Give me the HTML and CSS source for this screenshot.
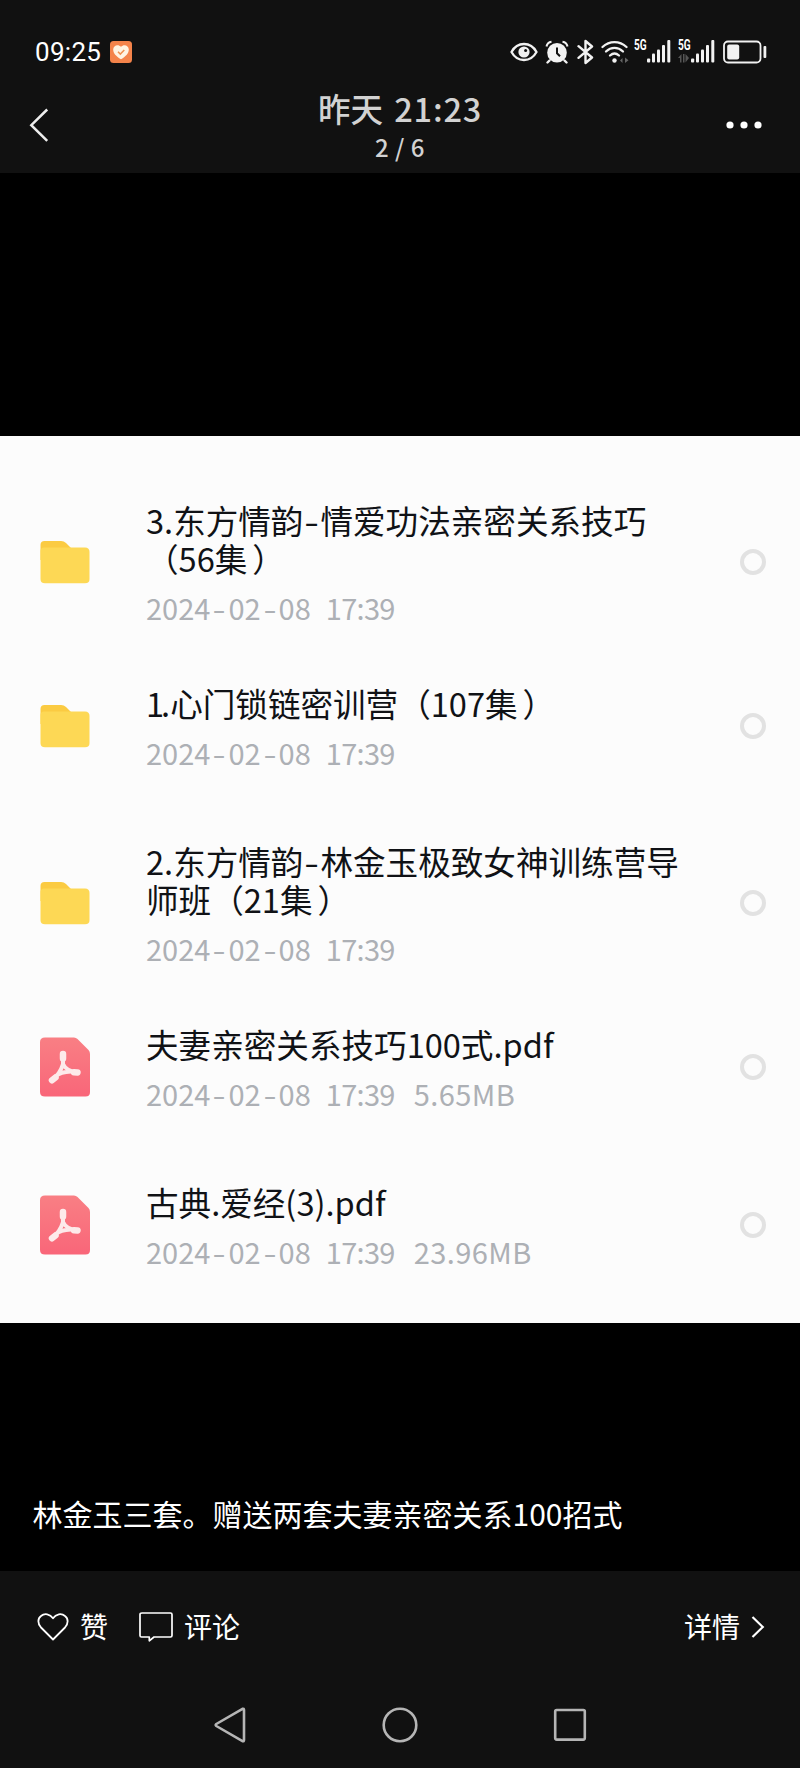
FILE: index.html
```html
<!DOCTYPE html>
<html lang="zh-CN">
<head>
  <meta charset="UTF-8">
  <title>昨天 21:23</title>
  <link rel="stylesheet" href="styles.css">
</head>
<body>

  <header class="header">
    <div class="status-bar">
      <span class="clock">09:25</span>
      <svg class="badge" width="22" height="22" viewBox="0 0 22 22">
        <rect width="22" height="22" rx="3.5" fill="#f4834a"/>
        <path d="M11 18.3 C6 15.5 3.2 12.2 3.2 8.6 C3.2 3.9 8.6 2.8 11 5.8 C13.4 2.8 18.8 3.9 18.8 8.6 C18.8 12.2 16 15.5 11 18.3Z" fill="#fff3e2"/>
        <path d="M8 10.8l2.3 2.3 4-4.2" fill="none" stroke="#f0904f" stroke-width="1.5"/>
      </svg>
      <div class="status-icons">
        <svg class="eye" width="28" height="20" viewBox="0 0 28 20">
          <path d="M1.500 10C4.500 4.500 9 2 14 2s9.500 2.500 12.500 8C23.500 15.500 19 18 14 18S4.500 15.500 1.500 10Z" fill="none" stroke="#f2f2f2" stroke-width="2.300"/>
          <circle cx="14" cy="10" r="5.600" fill="#f2f2f2"/>
          <circle cx="15.600" cy="8.600" r="1.500" fill="#111"/>
        </svg>
        <svg class="alarm" width="24" height="24" viewBox="0 0 24 24">
          <circle cx="12" cy="12.700" r="9.800" fill="#f2f2f2"/>
          <path d="M1.500 6.500C2 3.500 4 2 6.500 1.700M22.500 6.500C22 3.500 20 2 17.500 1.700" fill="none" stroke="#f2f2f2" stroke-width="2"/>
          <path d="M4.500 20.500l-2 2M19.500 20.500l2 2" stroke="#f2f2f2" stroke-width="2.400" stroke-linecap="round"/>
          <path d="M12 7.500v5.800l3 3" fill="none" stroke="#111" stroke-width="2"/>
        </svg>
        <svg class="bluetooth" width="17" height="26" viewBox="0 0 17 26">
          <path d="M1.500 7.200l13.500 11.300L8.500 24V2l6.500 5.500L1.500 18.800" fill="none" stroke="#f2f2f2" stroke-width="2.400" stroke-linejoin="round" stroke-linecap="round"/>
        </svg>
        <svg class="wifi" width="28" height="24" viewBox="0 0 28 24">
          <g fill="none" stroke="#f2f2f2" stroke-width="2.300" stroke-linecap="round">
            <path d="M1.500 7C8.500.500 18.500.500 25.500 7"/>
            <path d="M5 11.500c5-4.800 12-4.800 17 0"/>
            <path d="M9 15.500c3-2.700 6-2.700 9 0"/>
          </g>
          <circle cx="13.500" cy="20.500" r="2.200" fill="#f2f2f2"/>
          <path d="M21.500 18v5l-2.500-2.500zM24 17.500v5.500l3.500-2.700z" fill="#666"/>
        </svg>
        <div class="signal">
          <span class="net">5G</span>
          <svg width="24" height="23" viewBox="0 0 24 23" fill="#f2f2f2">
            <rect x="0" y="18.500" width="3.200" height="4" rx="1"/><rect x="5" y="13.500" width="3" height="9" rx="1"/><rect x="10" y="9.500" width="3" height="13" rx="1"/><rect x="15" y="5" width="3" height="17.500" rx="1"/><rect x="20.300" y="0" width="3" height="22.500" rx="1"/>
          </svg>
        </div>
        <div class="signal">
          <span class="net">5G</span>
          <svg class="traffic" width="12" height="9" viewBox="0 0 12 9"><path d="M0 4l3.500-4v8.500h-1.500V4zM5 0h1.500v8.500h-1.500zM7.500 0v8.500L11 4z" fill="#555"/></svg>
          <svg width="24" height="23" viewBox="0 0 24 23" fill="#f2f2f2">
            <rect x="0" y="18.500" width="3.200" height="4" rx="1"/><rect x="5" y="13.500" width="3" height="9" rx="1"/><rect x="10" y="9.500" width="3" height="13" rx="1"/><rect x="15" y="5" width="3" height="17.500" rx="1"/><rect x="20.300" y="0" width="3" height="22.500" rx="1"/>
          </svg>
        </div>
        <svg class="battery" width="44" height="24" viewBox="0 0 44 24">
          <rect x="1" y="1.500" width="36.500" height="21" rx="4" fill="none" stroke="#f2f2f2" stroke-width="1.800"/>
          <rect x="4.200" y="4.500" width="12" height="15" rx="2" fill="#f2f2f2"/>
          <rect x="40.500" y="6" width="2.800" height="12" rx="1" fill="#f2f2f2"/>
        </svg>
      </div>
    </div>
    <div class="nav-bar">
      <svg class="back" width="45" height="36" viewBox="0 0 45 36"><path d="M18.200 2.500L2.300 18.200l15.900 15.700" fill="none" stroke="#eee" stroke-width="2.500"/></svg>
      <div class="nav-title">
        <h1>昨天 <span>21:23</span></h1>
        <p>2 / 6</p>
      </div>
      <svg class="more" width="36" height="8" viewBox="0 0 36 8" fill="#fff"><circle cx="4" cy="4" r="3.600"/><circle cx="18" cy="4" r="3.600"/><circle cx="32" cy="4" r="3.600"/></svg>
    </div>
  </header>

  <!-- shared file icons -->
  <svg class="defs" width="0" height="0">
    <defs>
      <linearGradient id="pink" x1="0" y1="0" x2="0" y2="1">
        <stop offset="0" stop-color="#f97f84"/><stop offset="1" stop-color="#f96679"/>
      </linearGradient>
    </defs>
    <symbol id="folder" viewBox="0 0 50 44">
      <path d="M0.500 5Q0.500 1 4.500 1H21Q24 1 26 3L32 9V20H0.500Z" fill="#fbcb42"/>
      <path d="M0.500 11Q0.500 7.500 4 7.500H45Q49.500 7.500 49.500 12V39Q49.500 43.300 45 43.300H5Q0.500 43.300 0.500 39Z" fill="#fdd855"/>
    </symbol>
    <symbol id="pdf" viewBox="0 0 50 60">
      <path d="M0 5Q0 .500 5 .500H34Q36 .500 37.500 2L48.500 13Q50 14.500 50 17V55Q50 59.500 45.500 59.500H5Q0 59.500 0 55Z" fill="url(#pink)"/>
      <g fill="none" stroke="#fdeaea" stroke-linecap="round" stroke-linejoin="round">
        <path d="M23 17V27Q26 34 37 35.500M23 27Q20 37 12 43M16 39Q20 35 31 34.500" stroke-width="4"/>
        <path d="M23 17v4.500M34 35.200l3.500 .200M15.500 40.500l-3.500 2.700" stroke-width="6.500"/>
      </g>
    </symbol>
  </svg>

  <main class="file-list">
    <div class="file-row">
      <svg class="file-icon folder"><use href="#folder"/></svg>
      <div class="file-info">
        <div class="file-name">3.东方情韵<i>-</i>情爱功法亲密关系技巧<br>（56集<b>）</b></div>
        <div class="file-meta"><span>2024<i>-</i>02<i>-</i>08</span><span class="time">17:39</span></div>
      </div>
      <span class="check"></span>
    </div>
    <div class="file-row">
      <svg class="file-icon folder"><use href="#folder"/></svg>
      <div class="file-info">
        <div class="file-name"><span class="one">1</span>.心门锁链密训营（107集<b>）</b></div>
        <div class="file-meta"><span>2024<i>-</i>02<i>-</i>08</span><span class="time">17:39</span></div>
      </div>
      <span class="check"></span>
    </div>
    <div class="file-row">
      <svg class="file-icon folder"><use href="#folder"/></svg>
      <div class="file-info">
        <div class="file-name">2.东方情韵<i>-</i>林金玉极致女神训练营导<br>师班（21集<b>）</b></div>
        <div class="file-meta"><span>2024<i>-</i>02<i>-</i>08</span><span class="time">17:39</span></div>
      </div>
      <span class="check"></span>
    </div>
    <div class="file-row">
      <svg class="file-icon pdf"><use href="#pdf"/></svg>
      <div class="file-info">
        <div class="file-name">夫妻亲密关系技巧100式.pdf</div>
        <div class="file-meta"><span>2024<i>-</i>02<i>-</i>08</span><span class="time">17:39</span><span class="size">5.65MB</span></div>
      </div>
      <span class="check"></span>
    </div>
    <div class="file-row">
      <svg class="file-icon pdf"><use href="#pdf"/></svg>
      <div class="file-info">
        <div class="file-name">古典.爱经(3).pdf</div>
        <div class="file-meta"><span>2024<i>-</i>02<i>-</i>08</span><span class="time">17:39</span><span class="size">23.96MB</span></div>
      </div>
      <span class="check"></span>
    </div>
  </main>

  <p class="caption">林金玉三套。赠送两套夫妻亲密关系100招式</p>

  <footer class="footer">
    <div class="actions">
      <svg class="heart" width="32" height="28" viewBox="0 0 32 28"><path d="M16 26.500L4 14.500C.500 10.500.500 5.500 4 3C7.500 0 13 .800 16 5.300C19 .800 24.500 0 28 3C31.500 5.500 31.500 10.500 28 14.500Z" fill="none" stroke="#fff" stroke-width="1.800" stroke-linejoin="round"/></svg>
      <span class="like">赞</span>
      <svg class="bubble" width="34" height="30" viewBox="0 0 34 30"><path d="M3 1H31.500Q33 1 33 2.500V23.500Q33 25 31.500 25H15L10.300 28.800V25H2.500Q1 25 1 23.500V2.500Q1 1 3 1Z" fill="none" stroke="#fff" stroke-width="1.700" stroke-linejoin="round"/></svg>
      <span class="comment">评论</span>
      <span class="detail">详情</span>
      <svg class="arrow" width="14" height="24" viewBox="0 0 14 24"><path d="M1.500 2l10.300 10L1.500 22" fill="none" stroke="#fff" stroke-width="2.200"/></svg>
    </div>
    <div class="system-nav">
      <svg width="36" height="36" viewBox="0 0 36 36"><path d="M30.500 1.800Q32 1.300 32 3V33Q32 34.700 30.500 34.200L4.300 19Q3 18 4.300 17Z"/></svg>
      <svg width="36" height="36" viewBox="0 0 36 36"><circle cx="18" cy="18" r="16.300"/></svg>
      <svg width="36" height="36" viewBox="0 0 36 36"><rect x="3.200" y="3" width="29.600" height="29.600" rx="1.500"/></svg>
    </div>
  </footer>

</body>
</html>
```
FILE: styles.css
```css
* { box-sizing: border-box; margin: 0; padding: 0; }
body {
  width: 800px;
  height: 1768px;
  background-color: #000;
  color: #fff;
  font-family: "Noto Sans CJK SC", sans-serif;
  overflow: hidden;
}
svg { display: block; flex: none; }
.defs { position: absolute; }

.header { height: 173px; background-color: #111; }
.status-bar {
  display: flex; align-items: center;
  height: 90px;
  padding: 13px 33px 0 35px;
}
.clock {
  width: 75px;
  font-family: Roboto, sans-serif;
  font-size: 26px; line-height: 26px; letter-spacing: 0.3px;
}
.status-icons { display: flex; align-items: center; margin-left: auto; }
.alarm { margin-left: 7px; }
.bluetooth { margin-left: 8px; }
.wifi { margin-left: 7px; }
.signal {
  position: relative;
  display: flex; justify-content: flex-end;
  width: 37px; margin-left: 5px;
}
.signal + .signal { margin-left: 7px; }
.net {
  position: absolute; left: 0; top: 0;
  font-family: Roboto, sans-serif;
  font-size: 14px; line-height: 11px; font-weight: bold;
  transform: scaleX(0.72); transform-origin: left;
}
.traffic { position: absolute; left: 0; bottom: 0; }
.battery { margin-left: 8px; }

.nav-bar {
  display: flex; justify-content: space-between; align-items: flex-start;
  padding: 0 38px 0 29px;
}
.back { margin-top: 17px; }
.nav-title { text-align: center; color: #d2d2d2; }
.nav-title h1 { font-size: 32.5px; line-height: 36px; font-weight: 500; word-spacing: 4px; }
.nav-title h1 span { letter-spacing: 0.8px; }
.nav-title p { font-size: 24px; line-height: 32px; margin-top: 5px; font-weight: 500; letter-spacing: 0.5px; }
.more { margin-top: 31px; }

.file-list {
  height: 887px;
  margin-top: 263px;
  padding: 65px 34px 0 40px;
  background-color: #fcfcfc;
}
.file-row { display: flex; align-items: center; margin-bottom: 57px; }
.file-row:nth-child(even) { margin-bottom: 70px; }
.file-icon { width: 50px; margin-top: -4px; }
.folder { height: 44px; }
.pdf { height: 60px; }
.file-info { flex: 1; margin-left: 56px; }
.file-name {
  color: #101216;
  font-size: 32.6px; line-height: 38px;
  white-space: nowrap;
}
.file-name b { font-weight: normal; margin-left: 5px; }
.file-name .one { letter-spacing: -3px; }
.file-meta {
  display: flex; gap: 15px;
  margin: 11px 0 1px;
  color: #adb0b5;
  font-size: 29px; line-height: 38px;
}
.file-name i, .file-meta i {
  display: inline-block;
  width: 17px;
  font-style: normal; text-align: center;
  transform: scaleX(1.3);
}
.file-meta i { width: 18px; }
.time { letter-spacing: -0.7px; }
.size { margin-left: 4px; letter-spacing: 0.4px; }
.check {
  width: 26px; height: 26px;
  margin-top: -4px;
  border: 4px solid #e2e2e2; border-radius: 50%;
}

.caption {
  margin-top: 170px;
  padding-left: 32.5px;
  font-size: 30px; line-height: 40px;
}

.footer { height: 198px; margin-top: 38px; background-color: #111; }
.actions {
  display: flex; align-items: center;
  height: 111px;
  padding: 0 35px 0 37px;
  font-size: 28px; line-height: 36px;
}
.actions span { margin-top: -2px; }
.actions .like { margin-left: 11px; }
.bubble { margin-left: 31px; }
.actions .comment { margin-left: 11px; }
.actions .detail { margin-left: auto; }
.arrow { margin-left: 11px; }
.system-nav {
  display: flex; justify-content: space-between;
  padding: 25px 212px 0;
}
.system-nav svg { fill: none; stroke: #b5b5b5; stroke-width: 2.6; stroke-linejoin: round; }
```
